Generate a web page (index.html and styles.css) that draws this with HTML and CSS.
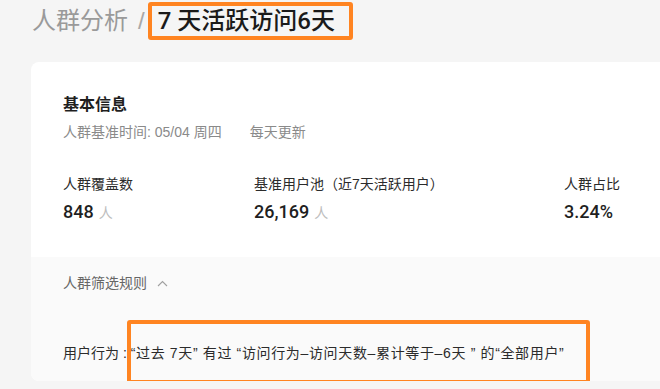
FILE: index.html
```html
<!DOCTYPE html>
<html>
<head>
    <title>人群分析</title>
    <link rel="stylesheet" href="styles.css">
</head>
<body>

    <div class="page">
        <h1 class="crumb">
            <span class="crumb-parent">人群分析</span>
            <span class="crumb-sep">/</span>
            <span class="crumb-current">7 天活跃访问6天</span>
        </h1>

        <div class="card">
            <section class="basic">
                <h2>基本信息</h2>
                <div class="meta">
                    <span>人群基准时间: 05/04 周四</span>
                    <span>每天更新</span>
                </div>
                <div class="stats">
                    <div class="stat">
                        <div class="stat-label">人群覆盖数</div>
                        <div class="stat-value">848<span class="unit">人</span></div>
                    </div>
                    <div class="stat">
                        <div class="stat-label">基准用户池（近7天活跃用户）</div>
                        <div class="stat-value">26,169<span class="unit">人</span></div>
                    </div>
                    <div class="stat">
                        <div class="stat-label">人群占比</div>
                        <div class="stat-value">3.24%</div>
                    </div>
                </div>
            </section>

            <section class="rules">
                <div class="rules-head">
                    人群筛选规则
                    <svg class="chevron" width="11" height="7" viewBox="0 0 11 7">
                        <polyline points="1,6 5.5,1.5 10,6" fill="none" stroke="#a0a0a0" stroke-width="1.1"/>
                    </svg>
                </div>
                <div class="rule">用户行为 : <span class="rule-body">“过去 7天” 有过 “访问行为–访问天数–累计等于–6天 ” 的“全部用户”</span></div>
                <!-- highlight drawn on top of the rule -->
                <div class="mark"></div>
            </section>
        </div>
    </div>

</body>
</html>
```

FILE: styles.css
```css
html {
    overflow: hidden;
}

body {
    font-family: "Liberation Sans", "Noto Sans CJK SC", sans-serif;
    margin: 0;
    padding: 0;
    background-color: #f5f5f5;
    color: #333;
}

.page {
    padding-left: 31px;
}

.crumb {
    display: flex;
    align-items: center;
    margin: 2px 0 0 0;
    font-size: 24px;
    font-weight: normal;
    line-height: 30px;
}

.crumb-parent {
    color: #9a9a9a;
    margin-left: 1px;
}

.crumb-sep {
    color: #a8a8a8;
    margin: 0 3px 0 10px;
}

.crumb-current {
    font-family: "Roboto", "Noto Sans CJK SC", sans-serif;
    color: #1a1a1a;
    font-weight: 500;
    border: 4px solid #ff8421; /* orange highlight */
    border-radius: 3px;
    padding: 0 14px 0 6px;
}

.card {
    background-color: #fff;
    border-radius: 8px;
    margin-top: 22px;
    margin-right: -40px;
}

.basic {
    padding: 31px 32px 32px 32px;
}

.basic h2 {
    margin: 0;
    font-size: 16px;
    line-height: 24px;
    font-weight: bold;
    color: #1f1f1f;
}

.meta {
    margin-top: 5px;
    display: flex;
    gap: 28px;
    font-size: 14px;
    line-height: 20px;
    color: #8a8a8a;
}

.stats {
    margin-top: 32px;
    display: grid;
    grid-template-columns: 191px 310px 1fr;
}

.stat-label {
    font-size: 14px;
    line-height: 20px;
    color: #2b2b2b;
}

.stat-value {
    margin-top: 6px;
    font-family: "Roboto", "Noto Sans CJK SC", sans-serif;
    font-size: 18px;
    line-height: 24px;
    font-weight: 500;
    color: #1f1f1f;
}

.unit {
    margin-left: 5px;
    font-size: 14px;
    font-weight: normal;
    color: #bdbdbd;
}

.rules {
    position: relative;
    background-color: #fafafa;
    border-radius: 0 0 8px 8px;
    padding: 16px 32px 18px 32px;
}

.rules-head {
    display: flex;
    align-items: center;
    font-size: 14px;
    line-height: 20px;
    color: #666;
}

.chevron {
    margin-left: 10px;
}

.rule {
    margin-top: 50px;
    font-size: 14px;
    line-height: 20px;
    color: #2b2b2b;
}

.rule-body {
    letter-spacing: 0.65px;
}

.mark {
    position: absolute;
    left: 96px;
    top: 63px;
    width: 455px;
    height: 56px;
    border: 4px solid #ff8421;
    border-radius: 3px;
}
```
